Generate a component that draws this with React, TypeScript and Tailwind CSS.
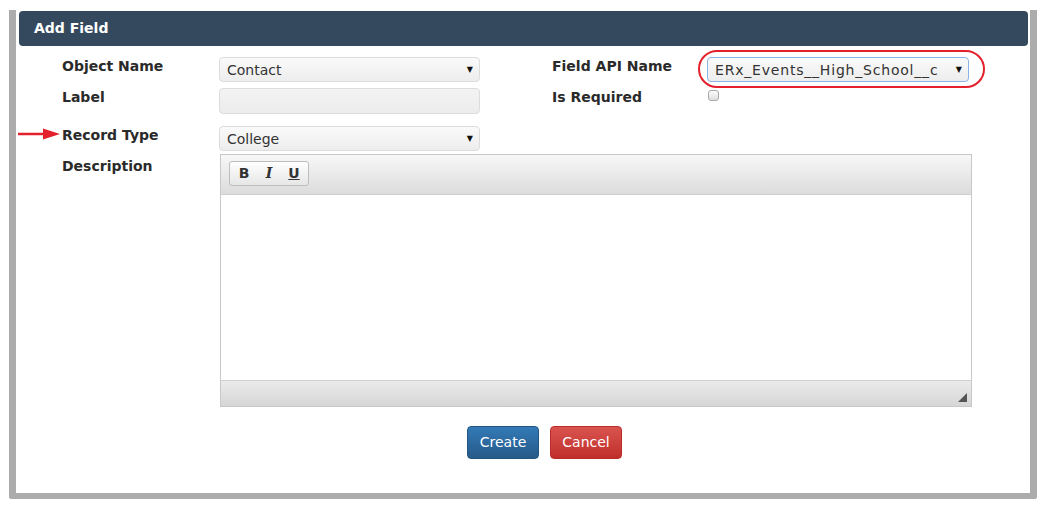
import React from 'react';

const font = { fontFamily: '"DejaVu Sans", Verdana, sans-serif' };

function Select({
  value,
  focused = false,
  width,
  spaced = false,
}: {
  value: string;
  focused?: boolean;
  width: string;
  spaced?: boolean;
}) {
  return (
    <div
      className={`${width} h-[25px] flex items-center justify-between pl-[7px] pr-[6px] rounded-[4px] border bg-gradient-to-b from-[#fafafa] to-[#ededed] ${
        focused ? 'border-[#8ab4e8]' : 'border-[#dcdcdc]'
      }`}
    >
      <span className={`text-[14px] text-[#333] leading-none ${spaced ? 'tracking-[0.8px]' : ''}`}>{value}</span>
      <span className="text-[8px] text-[#111] leading-none">▼</span>
    </div>
  );
}

const labelCls = 'mt-[1px] text-[14px] font-bold text-[#2a2a2a] leading-[17px]';

export default function App() {
  return (
    <div className="w-[1050px] h-[511px] bg-white overflow-hidden" style={font}>
      {/* Outer frame */}
      <div className="ml-[9px] mt-[10px] pt-[1px] w-[1028px] h-[489px] border-x-[7px] border-b-[6px] border-[#acacac] rounded-b-[3px]">
        {/* Header */}
        <div className="ml-[3px] w-[1009px] h-[35px] rounded-[4px] bg-[#34495e] flex items-center pl-[15px]">
          <span className="text-[14px] font-bold text-white">Add Field</span>
        </div>

        {/* Form */}
        <div className="pl-[46px] flex flex-col">
          {/* Row 1 */}
          <div className="mt-[11px] flex items-start h-[25px]">
            <div className={`w-[157px] ${labelCls}`}>Object Name</div>
            <Select value="Contact" width="w-[261px]" />
            <div className={`ml-[72px] w-[155px] ${labelCls}`}>Field API Name</div>
            <div className="relative">
              <Select value="ERx_Events__High_School__c" focused spaced width="w-[262px]" />
              <div className="absolute -left-[9px] -right-[16px] -top-[7px] -bottom-[6px] rounded-full border-2 border-[#e3202b] pointer-events-none" />
            </div>
          </div>

          {/* Row 2 */}
          <div className="mt-[6px] flex items-start h-[26px]">
            <div className={`w-[157px] ${labelCls}`}>Label</div>
            <div className="w-[261px] h-[26px] rounded-[4px] border border-[#dcdcdc] bg-gradient-to-b from-[#f3f3f3] to-[#ececec]" />
            <div className={`ml-[72px] w-[155px] ${labelCls}`}>Is Required</div>
            <div className="mt-[2px] ml-[1px] w-[11px] h-[11px] rounded-[3px] border border-[#a9a9a9] bg-gradient-to-b from-[#fcfcfc] to-[#dedede]" />
          </div>

          {/* Row 3 */}
          <div className="mt-[12px] flex items-start h-[25px] relative">
            <svg className="absolute -left-[44px] top-[2px]" width="42" height="12" viewBox="0 0 42 12">
              <line x1="0" y1="6" x2="28" y2="6" stroke="#e3202b" strokeWidth="2.5" />
              <polygon points="25,0.5 42,6 25,11.5" fill="#e3202b" />
            </svg>
            <div className={`w-[157px] ${labelCls}`}>Record Type</div>
            <Select value="College" width="w-[261px]" />
          </div>

          {/* Row 4 - Description editor */}
          <div className="mt-[3px] flex items-start">
            <div className="mt-[4px] w-[158px] text-[14px] font-bold text-[#2a2a2a] leading-[17px]">Description</div>
            <div className="w-[752px] h-[253px] border border-[#c8c8c8] flex flex-col">
              <div className="h-[40px] border-b border-[#cfcfcf] bg-gradient-to-b from-[#f7f7f7] to-[#dcdcdc] pt-[6px] pl-[8px]">
                <div className="w-[80px] h-[25px] rounded-[3px] border border-[#bdbdbd] bg-gradient-to-b from-[#ffffff] to-[#e6e6e6] flex items-center pl-[7px] gap-[11px] text-[14px] font-bold text-[#333]">
                  <span className="w-[14px] text-center">B</span>
                  <span className="w-[14px] text-center italic" style={{ fontFamily: '"DejaVu Serif", serif' }}>
                    I
                  </span>
                  <span className="w-[14px] text-center underline">U</span>
                </div>
              </div>
              <div className="flex-1 bg-white" />
              <div className="h-[26px] border-t border-[#d0d0d0] bg-gradient-to-b from-[#ebebeb] to-[#d6d6d6] flex items-end justify-end pr-[4px] pb-[4px]">
                <svg width="9" height="9" viewBox="0 0 9 9">
                  <polygon points="9,0 9,9 0,9" fill="#555" />
                </svg>
              </div>
            </div>
          </div>

          {/* Buttons */}
          <div className="mt-[19px] pl-[405px] flex gap-[11px]">
            <button className="w-[72px] h-[33px] rounded-[4px] border border-[#245580] bg-gradient-to-b from-[#337ab7] to-[#265a88] text-white text-[14px]">
              Create
            </button>
            <button className="w-[72px] h-[33px] rounded-[4px] border border-[#b92c28] bg-gradient-to-b from-[#d9534f] to-[#c12e2a] text-white text-[14px]">
              Cancel
            </button>
          </div>
        </div>
      </div>
    </div>
  );
}
